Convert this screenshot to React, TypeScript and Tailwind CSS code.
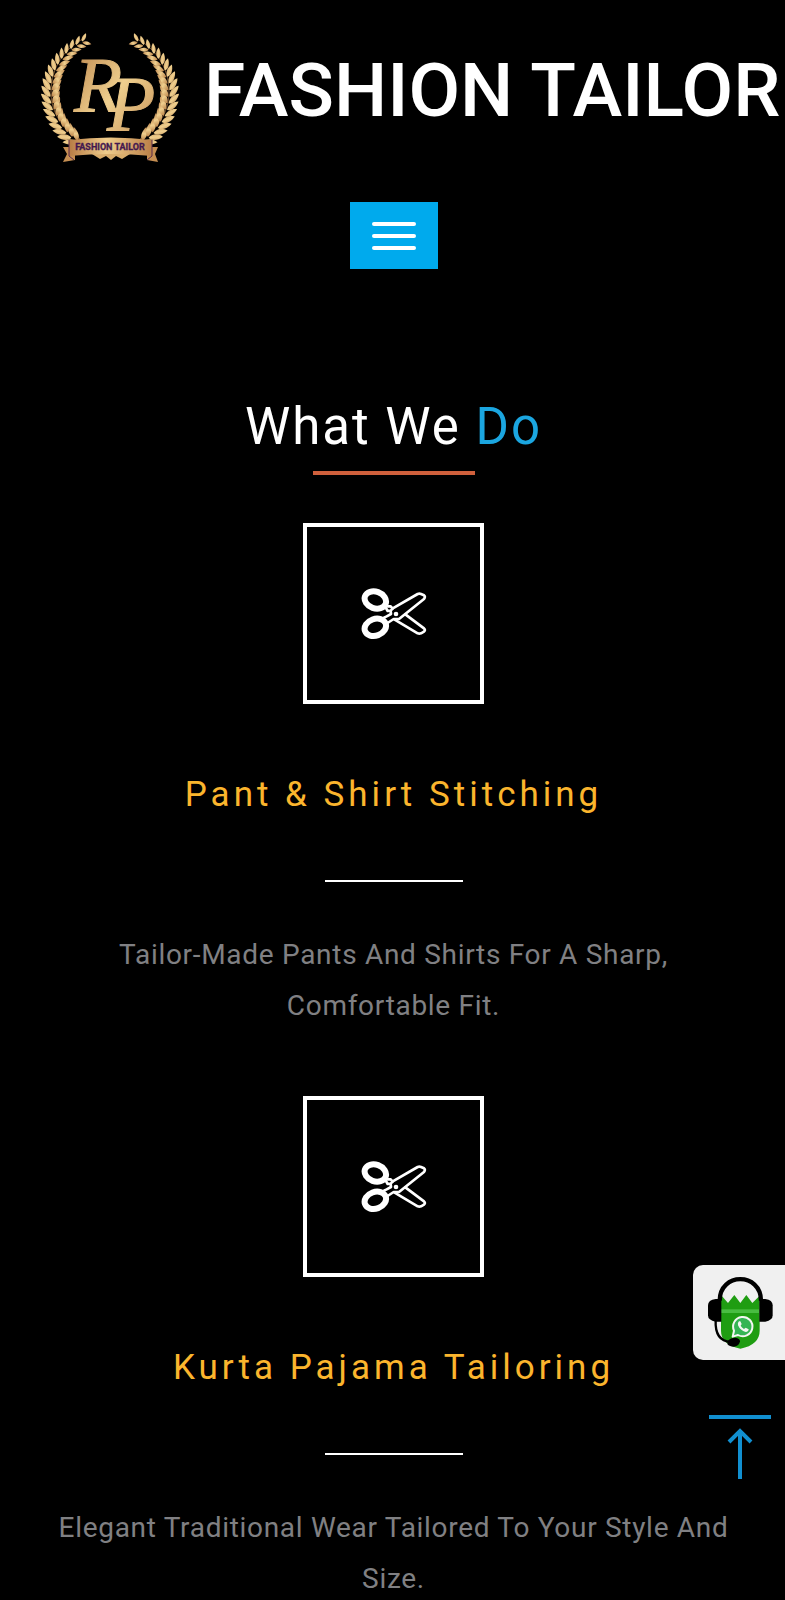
import React from 'react';
import { clsx } from 'clsx';

interface Service {
  title: string;
  text: string;
}

const services: Service[] = [
  {
    title: 'Pant & Shirt Stitching',
    text: 'Tailor-Made Pants And Shirts For A Sharp, Comfortable Fit.',
  },
  {
    title: 'Kurta Pajama Tailoring',
    text: 'Elegant Traditional Wear Tailored To Your Style And Size.',
  },
];

const LEAF_COUNT = 19;

// One branch of the wreath, growing from the ribbon up to the open top
function Branch({ mirrored = false }: { mirrored?: boolean }) {
  return (
    <g transform={mirrored ? 'translate(160 0) scale(-1 1)' : undefined}>
      <path
        d="M50 119 C34 110 21 94 21 72 C21 47 35 28 53 19"
        fill="none"
        stroke="#8f6238"
        strokeWidth="0.8"
      />
      {Array.from({ length: LEAF_COUNT }).map((_, i) => {
        const deg = 124 + (i * 118) / (LEAF_COUNT - 1);
        const rad = (deg * Math.PI) / 180;
        const x = 80 + 59 * Math.cos(rad);
        const y = 73 + 58 * Math.sin(rad);
        const size = 1 - Math.max(0, i - 9) * 0.04;
        return (
          <g key={i} transform={`translate(${x} ${y}) rotate(${deg + 92}) scale(${size})`}>
            <path d="M0 -0.5 C-1 -5 5 -9 11 -9.5 C9.5 -4 6 -0.5 0 -0.5Z" fill="url(#gold)" />
            <path d="M0 0.5 C-1 5 5 9 11 9.5 C9.5 4 6 0.5 0 0.5Z" fill="url(#gold)" />
          </g>
        );
      })}
    </g>
  );
}

function Logo() {
  return (
    <svg viewBox="0 0 170 160" className="w-[170px] h-[160px] shrink-0" role="img" aria-label="RP Fashion Tailor">
      <defs>
        <linearGradient id="gold" x1="0" y1="0" x2="1" y2="1">
          <stop offset="0" stopColor="#b98148" />
          <stop offset="0.5" stopColor="#efcf8e" />
          <stop offset="1" stopColor="#c08a52" />
        </linearGradient>
        <linearGradient id="ribbon" x1="0" y1="0" x2="1" y2="0">
          <stop offset="0" stopColor="#b77c45" />
          <stop offset="0.45" stopColor="#f0cd8c" />
          <stop offset="1" stopColor="#bb8048" />
        </linearGradient>
      </defs>
      <Branch />
      <Branch mirrored />
      <text
        x="44"
        y="91"
        fontSize="79"
        fill="url(#gold)"
        stroke="url(#gold)"
        strokeWidth="1"
        className="font-['Liberation_Serif',serif] italic"
      >
        R<tspan x="77" y="110">P</tspan>
      </text>
      <path d="M45 127 L33 127 L37 134 L33 142 L45 140Z M117 127 L128 127 L125 134 L128 142 L117 140Z" fill="#c58e52" />
      <path d="M62 134 L70 139 L76 136 L81 140 L86 136 L92 139 L100 134Z" fill="#d9ad6c" />
      <path d="M39 120 Q81 115 122 120 L122 136 Q81 132 39 136Z" fill="url(#ribbon)" />
      <path d="M39 120 L39 136 L44 140 M122 120 L122 136 L117 140" fill="none" stroke="#5a2b4a" strokeWidth="1" />
      <text
        x="80"
        y="130"
        textAnchor="middle"
        fontSize="9"
        fill="#43184f"
        stroke="#43184f"
        strokeWidth="0.3"
        className="font-[Roboto,sans-serif] font-bold"
      >
        FASHION TAILOR
      </text>
    </svg>
  );
}

function ScissorsIcon() {
  return (
    <svg viewBox="33 36 198 162" className="w-[66px] h-[54px]" fill="none" stroke="#fff" aria-hidden="true">
      <ellipse cx="76" cy="75" rx="33" ry="25" strokeWidth="18" transform="rotate(20 76 75)" />
      <ellipse cx="76" cy="157" rx="33" ry="25" strokeWidth="18" transform="rotate(-20 76 157)" />
      <g strokeWidth="8" strokeLinejoin="round" strokeLinecap="round">
        <path d="M127 101 L203 57 Q208 55 213 57 L222 61 Q227 65 222 72 L147 132 L131 132 L108 147" />
        <path d="M166 118 L222 160 Q227 165 222 170 L213 175 Q208 177 203 175 L134 134" />
        <path d="M108 99 L113 108 L122 107 L128 101 L122 94 L114 94" />
        <path d="M122 108 L123 117 L110 124 L102 128" />
      </g>
      <circle cx="138" cy="117" r="7" fill="#fff" stroke="none" />
    </svg>
  );
}

function HeadsetIcon() {
  return (
    <svg viewBox="108 76 207 222" className="w-[69px] h-[74px]" fill="none" aria-hidden="true">
      <path d="M153 133 L174 157 L193 133 L211 157 L229 133 L247 157 L269 135 L269 240 Q269 282 211 294 Q153 282 153 240Z" fill="#1f9d12" />
      <rect x="153" y="176" width="116" height="11" fill="#49bd42" />
      <path d="M149 150 C149 64 273 64 273 150" stroke="#000" strokeWidth="13" />
      <path d="M154 145 L154 213 L137 213 Q114 209 114 194 L114 164 Q114 148 137 145Z" fill="#000" />
      <path d="M268 145 L268 213 L286 213 Q308 209 308 194 L308 164 Q308 148 286 145Z" fill="#000" />
      <path d="M137 208 C135 250 150 272 182 274" stroke="#000" strokeWidth="7" />
      <path d="M174 270 Q182 261 196 261 Q210 263 210 272 Q208 286 192 288 Q178 288 172 280Z" fill="#000" />
      <path d="M188 258 L192 240 A29 29 0 1 1 204 253Z" fill="#35b554" stroke="#f4f6f2" strokeWidth="6" strokeLinejoin="round" />
      <path
        d="M207 212 Q202 217 204 224 Q211 240 227 244 Q236 243 236 236 L227 231 L222 235 Q215 231 212 225 L215 220 L211 212Z"
        fill="#f4f6f2"
      />
    </svg>
  );
}

function ServiceItem({ title, text }: Service) {
  return (
    <article className="flex flex-col items-center text-center">
      <div className="flex items-center justify-center size-[181px] border-4 border-white">
        <ScissorsIcon />
      </div>
      <h3 className="mt-[71px] text-[35px] leading-10 tracking-[4px] text-[#fbb52d]">{title}</h3>
      <span className="mt-[65px] w-[138px] h-0.5 bg-white" />
      <p className="mt-[47px] text-[28px] leading-[51px] tracking-wide text-[#808083]">{text}</p>
    </article>
  );
}

function MenuButton({ className }: { className?: string }) {
  return (
    <button
      type="button"
      aria-label="Toggle navigation"
      className={clsx('flex flex-col items-center justify-center gap-2 w-[88px] h-[67px] bg-[#00aaed]', className)}
    >
      <span className="w-11 h-1 rounded-xs bg-white" />
      <span className="w-11 h-1 rounded-xs bg-white" />
      <span className="w-11 h-1 rounded-xs bg-white" />
    </button>
  );
}

export default function App() {
  return (
    <div className="min-h-screen overflow-x-hidden bg-black pl-0.5 font-[Roboto,sans-serif] text-white">
      <header className="flex flex-col">
        <a href="#" className="flex items-start gap-1 pt-5 pl-7">
          <Logo />
          <h1 className="mt-[30px] text-[75px] leading-[80px] font-medium whitespace-nowrap">FASHION TAILOR</h1>
        </a>
        <MenuButton className="mt-[22px] mx-auto" />
      </header>

      <main className="flex flex-col items-center px-8 pt-32">
        <h2 className="text-[51px] leading-[60px] tracking-[2px]">
          What We <span className="text-[#1ba6e0]">Do</span>
        </h2>
        <span className="mt-3.5 w-[162px] h-1 bg-[#d0603c]" />
        <div className="mt-12 flex flex-col gap-[65px]">
          {services.map((service) => (
            <ServiceItem key={service.title} {...service} />
          ))}
        </div>
      </main>

      <a
        href="#chat"
        aria-label="Chat on WhatsApp"
        className="fixed right-0 bottom-60 flex items-center pl-[13px] w-[92px] h-[95px] rounded-l-[10px] bg-[#f0f0f0]"
      >
        <HeadsetIcon />
      </a>
      <a href="#" aria-label="Back to top" className="fixed right-3 bottom-[119px]">
        <svg viewBox="0 0 66 66" className="w-[66px] h-[66px]" fill="none" stroke="#118fd0" strokeWidth="4" aria-hidden="true">
          <path d="M2 2H64" />
          <path d="M33 64V17M22 27L33 16L44 27" />
        </svg>
      </a>
    </div>
  );
}
